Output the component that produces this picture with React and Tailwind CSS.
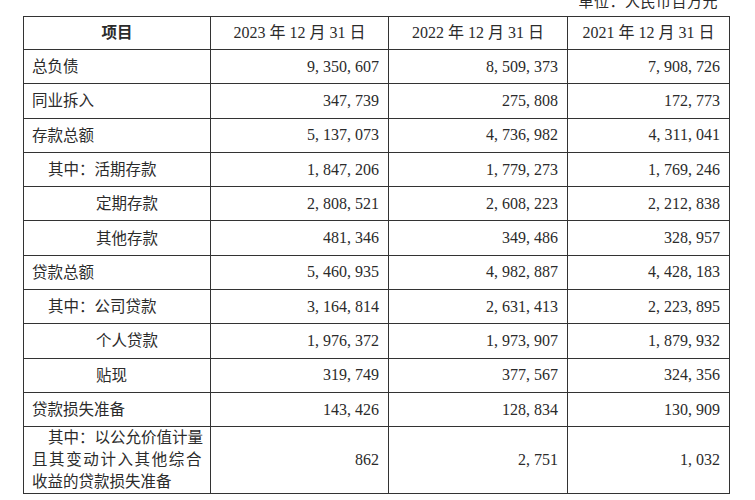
const years = ["2023 年 12 月 31 日", "2022 年 12 月 31 日", "2021 年 12 月 31 日"];

const rows = [
  { label: "总负债", indent: 0, v: ["9, 350, 607", "8, 509, 373", "7, 908, 726"] },
  { label: "同业拆入", indent: 0, v: ["347, 739", "275, 808", "172, 773"] },
  { label: "存款总额", indent: 0, v: ["5, 137, 073", "4, 736, 982", "4, 311, 041"] },
  { label: "其中：活期存款", indent: 1, v: ["1, 847, 206", "1, 779, 273", "1, 769, 246"] },
  { label: "定期存款", indent: 2, v: ["2, 808, 521", "2, 608, 223", "2, 212, 838"] },
  { label: "其他存款", indent: 2, v: ["481, 346", "349, 486", "328, 957"] },
  { label: "贷款总额", indent: 0, v: ["5, 460, 935", "4, 982, 887", "4, 428, 183"] },
  { label: "其中：公司贷款", indent: 1, v: ["3, 164, 814", "2, 631, 413", "2, 223, 895"] },
  { label: "个人贷款", indent: 2, v: ["1, 976, 372", "1, 973, 907", "1, 879, 932"] },
  { label: "贴现", indent: 2, v: ["319, 749", "377, 567", "324, 356"] },
  { label: "贷款损失准备", indent: 0, v: ["143, 426", "128, 834", "130, 909"] },
];

const indents = ["pl-[8px]", "pl-[24px]", "pl-[72px]"];

export default function App() {
  return (
    <div className="w-[755px] h-[500px] bg-white overflow-hidden pl-[23px] text-[#2b2b2b] font-['Liberation_Serif','Noto_Sans_CJK_SC',serif]">
      <div className="h-[16px] w-[706px] flex justify-end pr-[11px]">
        <span className="-mt-[5px] text-[15px] leading-[15px] tracking-[0.5px]">单位：人民币百万元</span>
      </div>
      <table className="table-fixed border-collapse w-[706px] text-[15.5px]">
        <colgroup>
          <col className="w-[187px]" />
          <col className="w-[178px]" />
          <col className="w-[179px]" />
          <col className="w-[162px]" />
        </colgroup>
        <thead>
          <tr className="h-[33px]">
            <th className="border border-[#333] font-semibold text-center">项目</th>
            {years.map((y) => (
              <th key={y} className="border border-[#333] font-normal text-center text-[16px]">
                {y}
              </th>
            ))}
          </tr>
        </thead>
        <tbody>
          {rows.map((r) => (
            <tr key={r.label} className="h-[34.3px]">
              <td className={`border border-[#333] ${indents[r.indent]}`}>{r.label}</td>
              {r.v.map((n, i) => (
                <td key={i} className="border border-[#333] text-right pr-[9px] text-[16px]">
                  {n}
                </td>
              ))}
            </tr>
          ))}
          <tr className="h-[64px]">
            <td className="border border-[#333] pl-[8px] leading-[22px]">
              <div className="pl-[16px]">其中：以公允价值计量</div>
              <div className="tracking-[1.6px]">且其变动计入其他综合</div>
              <div>收益的贷款损失准备</div>
            </td>
            {["862", "2, 751", "1, 032"].map((n, i) => (
              <td key={i} className="border border-[#333] text-right pr-[9px] text-[16px]">
                {n}
              </td>
            ))}
          </tr>
        </tbody>
      </table>
    </div>
  );
}
